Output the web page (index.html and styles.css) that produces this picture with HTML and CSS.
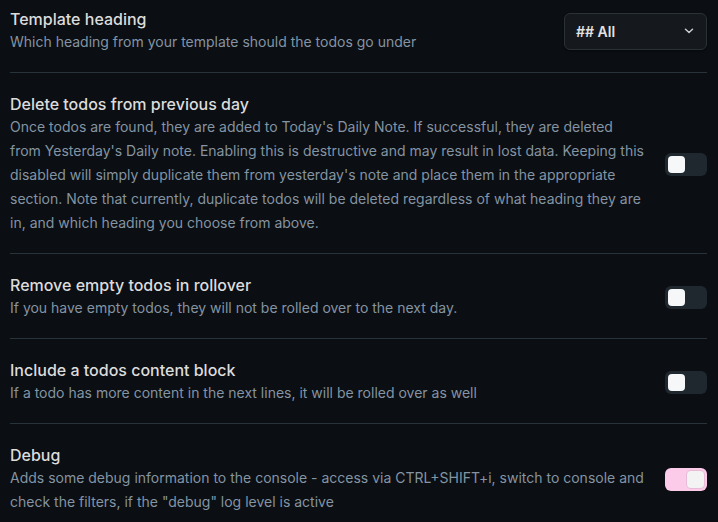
FILE: index.html
```html
<!DOCTYPE html>
<html>
<head>
<meta charset="utf-8">
<link rel="stylesheet" href="styles.css">
</head>
<body>
<div class="settings">
  <div class="item first">
    <div class="info">
      <div class="name">Template heading</div>
      <div class="desc">Which heading from your template should the todos go under</div>
    </div>
    <div class="control">
      <div class="dropdown">
        <span>## All</span>
        <svg width="10" height="6" viewBox="0 0 10 6"><path d="M1.5 1.2 L5 4.5 L8.5 1.2" fill="none" stroke="#c9cdd1" stroke-width="1.5" stroke-linecap="round" stroke-linejoin="round"/></svg>
      </div>
    </div>
  </div>
  <div class="item">
    <div class="info">
      <div class="name">Delete todos from previous day</div>
      <div class="desc">Once todos are found, they are added to Today's Daily Note. If successful, they are deleted<br>from Yesterday's Daily note. Enabling this is destructive and may result in lost data. Keeping this<br>disabled will simply duplicate them from yesterday's note and place them in the appropriate<br>section. Note that currently, duplicate todos will be deleted regardless of what heading they are<br>in, and which heading you choose from above.</div>
    </div>
    <div class="control"><div class="toggle"><div class="knob"></div></div></div>
  </div>
  <div class="item">
    <div class="info">
      <div class="name">Remove empty todos in rollover</div>
      <div class="desc">If you have empty todos, they will not be rolled over to the next day.</div>
    </div>
    <div class="control"><div class="toggle"><div class="knob"></div></div></div>
  </div>
  <div class="item">
    <div class="info">
      <div class="name">Include a todos content block</div>
      <div class="desc">If a todo has more content in the next lines, it will be rolled over as well</div>
    </div>
    <div class="control"><div class="toggle"><div class="knob"></div></div></div>
  </div>
  <div class="item">
    <div class="info">
      <div class="name">Debug</div>
      <div class="desc">Adds some debug information to the console - access via CTRL+SHIFT+i, switch to console and<br>check the filters, if the "debug" log level is active</div>
    </div>
    <div class="control"><div class="toggle on"><div class="knob"></div></div></div>
  </div>
</div>
</body>
</html>
```

FILE: styles.css
```css
html, body {
  margin: 0;
  padding: 0;
  background: #0b0e12;
  height: 100%;
  overflow: hidden;
}
body {
  font-family: Inter, "Noto Sans", sans-serif;
}
.settings {
  padding: 0 11px 0 10px;
}
.item {
  display: flex;
  align-items: center;
  border-top: 1px solid #28323b;
  padding: 20px 0 18px 0;
}
.item.first {
  border-top: none;
  padding-top: 8px;
}
.info {
  flex: 1;
  margin-right: 4px;
}
.name {
  font-size: 16px;
  line-height: 22px;
  color: #dcdcdc;
  font-weight: 500;
}
.desc {
  font-size: 14px;
  line-height: 24px;
  color: #8494a3;
}
.control {
  flex: none;
  display: flex;
  justify-content: flex-end;
}
.dropdown {
  box-sizing: border-box;
  width: 143px;
  height: 37px;
  background: #15191d;
  border: 1px solid #2a3137;
  border-radius: 6px;
  display: flex;
  align-items: center;
  justify-content: space-between;
  padding: 0 12px 0 11px;
  color: #e2e2e2;
  font-size: 14px;
  font-weight: 600;
  box-shadow: 0 1px 2px rgba(0,0,0,0.4);
}
.toggle {
  box-sizing: border-box;
  width: 42px;
  height: 23px;
  border-radius: 6px;
  background: #1f282e;
  padding: 3px;
  display: flex;
  justify-content: flex-start;
}
.toggle.on {
  background: #fccbea;
  justify-content: flex-end;
}
.knob {
  width: 17px;
  height: 17px;
  border-radius: 4px;
  background: #f6f7f8;
}
.toggle.on .knob {
  background: #f3f3f4;
  box-shadow: 0 0 0 1px rgba(0,0,0,0.08);
}
```
